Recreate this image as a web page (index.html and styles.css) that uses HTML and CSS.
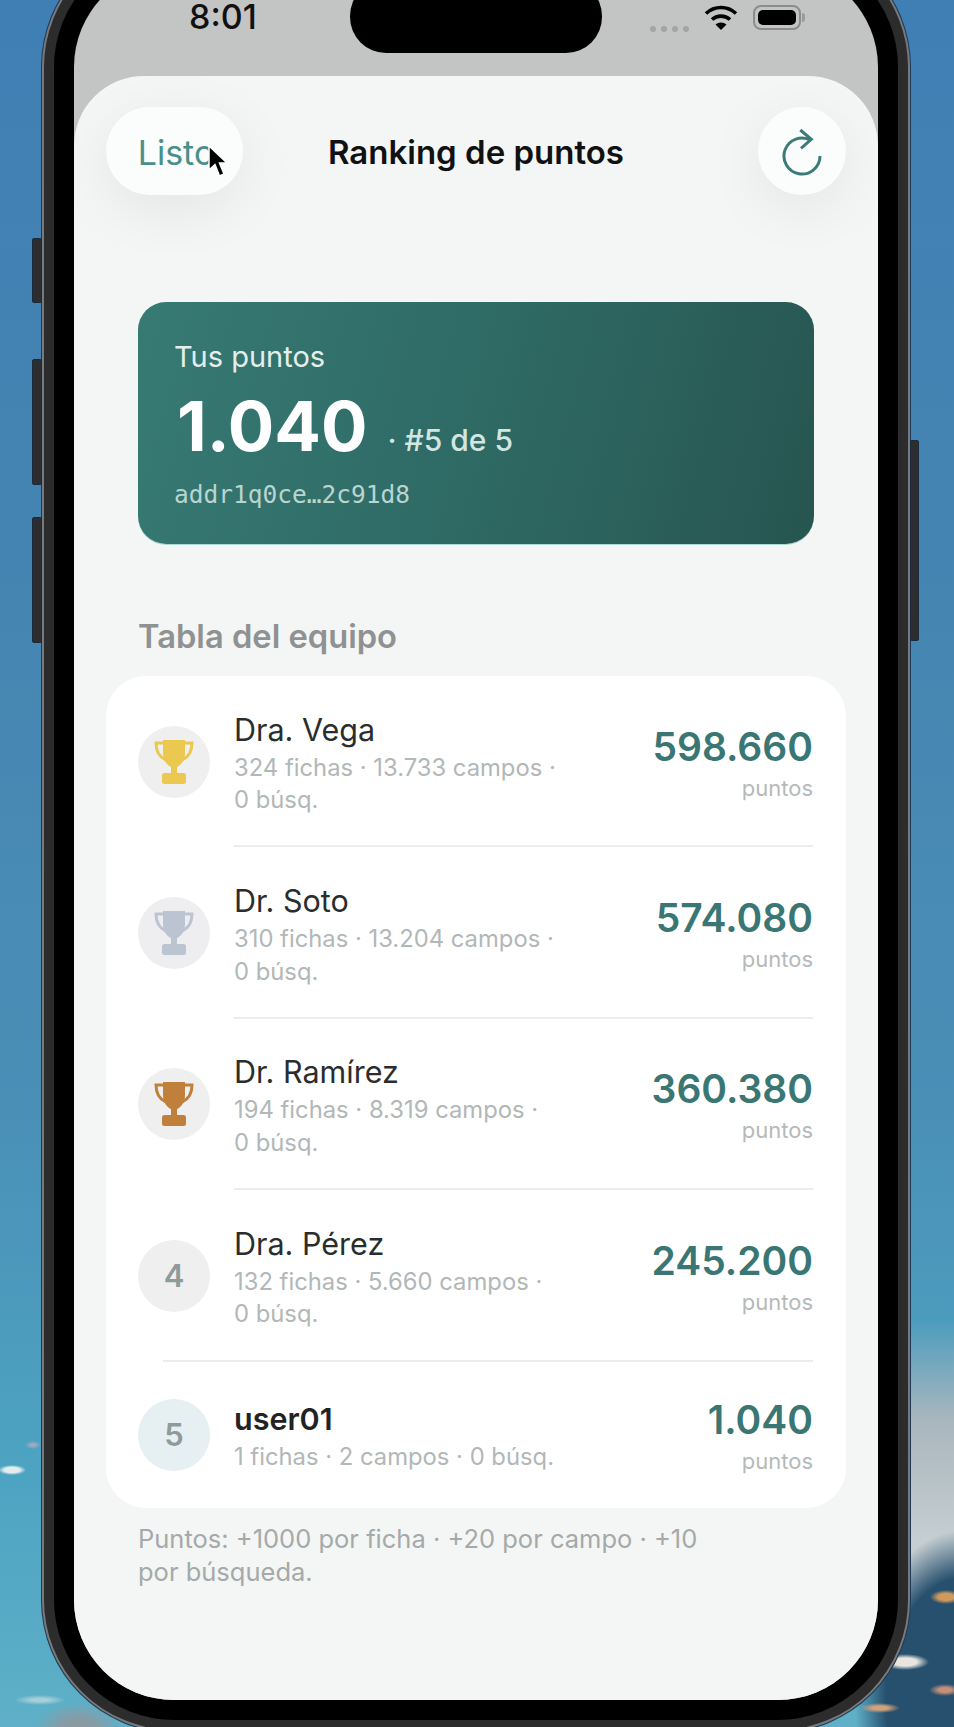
FILE: index.html
```html
<!DOCTYPE html>
<html lang="es">
<head>
    <meta charset="UTF-8">
    <meta name="viewport" content="width=device-width, initial-scale=1.0">
    <title>Ranking de puntos</title>
    <link rel="stylesheet" href="styles.css">
</head>
<body>
    <svg class="defs" width="0" height="0">
        <symbol id="trophy" viewBox="0 0 40 46">
            <path d="M9 1H31V14C31 22 26 27 23 28V34H17V28C14 27 9 22 9 14Z" fill="currentColor"/>
            <rect x="8" y="34" width="24" height="11" rx="2.5" fill="currentColor"/>
            <path d="M9 4H2C2 13 5 18 12 21M31 4H38C38 13 35 18 28 21" fill="none" stroke="currentColor" stroke-width="3"/>
        </symbol>
    </svg>

    <div class="phone">
        <span class="side-btn btn-a"></span>
        <span class="side-btn btn-b"></span>
        <span class="side-btn btn-c"></span>
        <span class="side-btn btn-d"></span>
        <div class="bezel">
            <div class="screen">
                <div class="status">
                    <div class="status-left">8:01</div>
                    <div class="island"></div>
                    <div class="status-right">
                        <div class="dots"><i></i><i></i><i></i><i></i></div>
                        <svg class="wifi" width="34" height="26" viewBox="0 0 34 26">
                            <path d="M2 9.5C10.500 1.500 23.500 1.500 32 9.500" fill="none" stroke="#000" stroke-width="3.600"/>
                            <path d="M8 15.500C13 11 21 11 26 15.500" fill="none" stroke="#000" stroke-width="3.600"/>
                            <path d="M17 26L11.500 20.500C14.500 17.800 19.500 17.800 22.500 20.500Z" fill="#000"/>
                        </svg>
                        <div class="battery"><div class="battery-fill"></div></div>
                        <span class="battery-nub"></span>
                    </div>
                </div>

                <div class="sheet">
                    <div class="header">
                        <button class="pill" type="button">Listo
                            <svg class="cursor" width="22" height="34" viewBox="0 0 22 34">
                                <path d="M2 1V25L8 19.500L12.500 31L17 29L12.500 18H20Z" fill="#000" stroke="#fff" stroke-width="1.500"/>
                            </svg>
                        </button>
                        <div class="title">Ranking de puntos</div>
                        <button class="round" type="button">
                            <svg width="44" height="50" viewBox="0 0 44 50">
                                <path d="M31 14.400A18 18 0 1 0 40 30" fill="none" stroke="#3b7c79" stroke-width="3"/>
                                <path d="M20.300 4L31.300 13.300L21 22.300" fill="none" stroke="#3b7c79" stroke-width="3"/>
                            </svg>
                        </button>
                    </div>

                    <div class="score-card">
                        <div class="score-label">Tus puntos</div>
                        <div class="score-line">
                            <span class="score-num">1.040</span>
                            <span class="score-rank">· #5 de 5</span>
                        </div>
                        <div class="score-addr">addr1q0ce…2c91d8</div>
                    </div>

                    <h2 class="section">Tabla del equipo</h2>

                    <div class="list">
                        <div class="row">
                            <div class="badge"><svg class="cup gold"><use href="#trophy"/></svg></div>
                            <div class="info">
                                <div class="name">Dra. Vega</div>
                                <div class="sub">324 fichas · 13.733 campos ·<br>0 búsq.</div>
                            </div>
                            <div class="pts">
                                <div class="pts-num">598.660</div>
                                <div class="pts-label">puntos</div>
                            </div>
                        </div>
                        <div class="divider"></div>
                        <div class="row">
                            <div class="badge silver-bg"><svg class="cup silver"><use href="#trophy"/></svg></div>
                            <div class="info">
                                <div class="name">Dr. Soto</div>
                                <div class="sub">310 fichas · 13.204 campos ·<br>0 búsq.</div>
                            </div>
                            <div class="pts">
                                <div class="pts-num">574.080</div>
                                <div class="pts-label">puntos</div>
                            </div>
                        </div>
                        <div class="divider"></div>
                        <div class="row">
                            <div class="badge"><svg class="cup bronze"><use href="#trophy"/></svg></div>
                            <div class="info">
                                <div class="name">Dr. Ramírez</div>
                                <div class="sub">194 fichas · 8.319 campos ·<br>0 búsq.</div>
                            </div>
                            <div class="pts">
                                <div class="pts-num">360.380</div>
                                <div class="pts-label">puntos</div>
                            </div>
                        </div>
                        <div class="divider"></div>
                        <div class="row">
                            <div class="badge">4</div>
                            <div class="info">
                                <div class="name">Dra. Pérez</div>
                                <div class="sub">132 fichas · 5.660 campos ·<br>0 búsq.</div>
                            </div>
                            <div class="pts">
                                <div class="pts-num">245.200</div>
                                <div class="pts-label">puntos</div>
                            </div>
                        </div>
                        <div class="divider wide"></div>
                        <div class="row me">
                            <div class="badge me-bg">5</div>
                            <div class="info">
                                <div class="name">user01</div>
                                <div class="sub">1 fichas · 2 campos · 0 búsq.</div>
                            </div>
                            <div class="pts">
                                <div class="pts-num">1.040</div>
                                <div class="pts-label">puntos</div>
                            </div>
                        </div>
                    </div>

                    <p class="note">Puntos: +1000 por ficha · +20 por campo · +10 por búsqueda.</p>
                </div>
            </div>
        </div>
    </div>
</body>
</html>
```

FILE: styles.css
```css
* {
    box-sizing: border-box;
}
html, body {
    margin: 0;
    height: 1727px;
    overflow: hidden;
}
body {
    font-family: "Inter", "Liberation Sans", sans-serif;
    background-color: #4589b5;
    background-repeat: no-repeat;
    background-image:
        radial-gradient(ellipse 14px 5px at 12px 1470px, #e4ecec 55%, transparent 100%),
        radial-gradient(ellipse 8px 4px at 33px 1445px, #a9a8c4 20%, transparent 100%),
        radial-gradient(ellipse 26px 5px at 40px 1700px, #a9d0d8 30%, transparent 100%),
        radial-gradient(ellipse 44px 30px at 78px 1732px, #8a9aa2 40%, transparent 100%),
        radial-gradient(ellipse 24px 8px at 905px 1662px, #e8e6df 50%, transparent 100%),
        radial-gradient(ellipse 16px 7px at 946px 1597px, #d09a5c 50%, transparent 100%),
        radial-gradient(ellipse 20px 5px at 880px 1708px, #d0a27a 40%, transparent 100%),
        radial-gradient(ellipse 16px 6px at 945px 1690px, #c4907a 40%, transparent 100%),
        radial-gradient(ellipse 110px 170px at 965px 1700px, #27506e 72%, transparent 100%),
        linear-gradient(180deg, transparent 1320px, #a9b6bd 1420px, #c5ced2 1540px, #c5ced2 1727px),
        linear-gradient(180deg, #3f7fb4 0, #4585b2 600px, #4a8fb6 1100px, #4da4c2 1480px, #5fb0c8 1727px);
    background-size: auto, auto, auto, auto, auto, auto, auto, auto, auto, 44px 100%, auto;
    background-position: 0 0, 0 0, 0 0, 0 0, 0 0, 0 0, 0 0, 0 0, 0 0, right top, 0 0;
}
.defs {
    position: absolute;
}

.phone {
    position: relative;
    width: 868px;
    height: 1797px;
    margin: -65px 0 0 42px;
}
.bezel {
    height: 100%;
    padding: 20px;
    background: #000;
    border: 12px solid #2c2c2c;
    border-radius: 132px;
    box-shadow: 0 0 0 1px #1d3a5a;
    outline: 2px solid #777a7c;
    outline-offset: -2px;
}
.side-btn {
    position: absolute;
    width: 10px;
    background: #2b2d30;
    border: 1px solid #1c2a3c;
    border-radius: 2px;
}
.btn-a { left: -10px; top: 303px; height: 65px; }
.btn-b { left: -10px; top: 424px; height: 126px; }
.btn-c { left: -10px; top: 582px; height: 126px; }
.btn-d { right: -9px; top: 505px; height: 201px; width: 9px; }

.screen {
    display: flex;
    flex-direction: column;
    height: 100%;
    background: #c3c5c4;
    border-radius: 100px;
    overflow: hidden;
}

.status {
    display: flex;
    flex: 0 0 109px;
}
.status-left {
    width: 276px;
    padding: 35px 0 0 115px;
    font-size: 34px;
    font-weight: 500;
    line-height: 30px;
    color: #111;
}
.island {
    width: 252px;
    height: 73px;
    margin-top: 13px;
    background: #000;
    border-radius: 36px;
}
.status-right {
    display: flex;
    align-items: center;
    height: 26px;
    margin: 37px 0 0 48px;
}
.dots {
    display: flex;
    gap: 5px;
    margin: 24px 15px 0 0;
}
.dots i {
    width: 6px;
    height: 6px;
    background: #a3a5a5;
    border-radius: 50%;
}
.battery {
    width: 48px;
    height: 25px;
    margin-left: 15px;
    padding: 3px;
    border: 2px solid #8b8d8d;
    border-radius: 8px;
}
.battery-fill {
    height: 100%;
    background: #000;
    border-radius: 5px;
}
.battery-nub {
    width: 3px;
    height: 9px;
    margin-left: 1px;
    background: #9a9c9c;
    border-radius: 0 3px 3px 0;
}

.sheet {
    flex: 1;
    padding: 31px 32px 0;
    background: #f4f6f5;
    border-radius: 70px 70px 0 0;
}
.header {
    display: grid;
    grid-template-columns: 1fr auto 1fr;
    align-items: center;
    height: 88px;
}
.pill, .round {
    height: 88px;
    padding: 0;
    font-family: inherit;
    background: #fbfdfc;
    border: 0;
    box-shadow: 0 14px 60px rgba(0, 0, 0, 0.07);
}
.pill {
    position: relative;
    justify-self: start;
    width: 137px;
    padding: 3px 0 0 3px;
    font-size: 34px;
    color: #4a8f8b;
    border-radius: 44px;
}
.cursor {
    position: absolute;
    left: 101px;
    top: 38px;
}
.round {
    display: flex;
    align-items: center;
    justify-content: center;
    justify-self: end;
    width: 88px;
    border-radius: 50%;
}
.title {
    padding-top: 2px;
    font-size: 33px;
    font-weight: 600;
    color: #111;
}

.score-card {
    height: 242px;
    margin: 107px 32px 0;
    padding: 35px 36px;
    color: #fff;
    background: linear-gradient(105deg, #377a74 0%, #2f6a65 50%, #275550 100%);
    border-radius: 28px;
    box-shadow: 0 1px 0 #a8dad2;
}
.score-label {
    font-size: 29px;
    line-height: 40px;
    color: #e2efec;
}
.score-line {
    display: flex;
    align-items: baseline;
    gap: 20px;
    margin: 11px 0 0 3px;
}
.score-num {
    font-size: 69px;
    font-weight: 700;
    line-height: 76px;
}
.score-rank {
    font-size: 30px;
    font-weight: 500;
    color: #d3e6e2;
}
.score-addr {
    margin-top: 16px;
    font-family: "DejaVu Sans Mono", "Liberation Mono", monospace;
    font-size: 24.500px;
    color: #b9d5d0;
}

.section {
    margin: 68px 0 0 32px;
    font-size: 32.700px;
    font-weight: 600;
    line-height: 48px;
    color: #8f9192;
}

.list {
    margin-top: 16px;
    background: #fff;
    border-radius: 40px;
}
.row {
    display: flex;
    align-items: center;
    gap: 24px;
    height: 169.400px;
    padding: 2px 33px 0 32px;
}
.row.me {
    height: 146px;
    padding-top: 0;
}
.divider {
    height: 2px;
    margin: 0 33px 0 128px;
    background: #ececec;
}
.divider.wide {
    margin-left: 57px;
}
.badge {
    display: flex;
    flex: 0 0 72px;
    align-items: center;
    justify-content: center;
    height: 72px;
    font-size: 31px;
    font-weight: 600;
    color: #8f9a9a;
    background: #efefef;
    border-radius: 50%;
}
.silver-bg {
    background: #eeeef0;
}
.me-bg {
    background: #e6eff1;
}
.cup {
    width: 40px;
    height: 46px;
}
.gold { color: #ebc84f; }
.silver { color: #bcc4d2; }
.bronze { color: #c0803c; }

.info {
    flex: 1;
    padding-top: 3px;
}
.name {
    font-size: 30.500px;
    line-height: 40px;
    color: #2b2d2d;
}
.me .name {
    font-weight: 600;
    color: #222;
}
.sub {
    margin-top: 2px;
    font-size: 23.800px;
    line-height: 32.500px;
    color: #b2b7b7;
}
.pts {
    padding-top: 3px;
    text-align: right;
}
.pts-num {
    font-size: 39px;
    font-weight: 600;
    line-height: 46px;
    color: #3a7673;
}
.pts-label {
    margin-top: 3px;
    font-size: 22px;
    line-height: 30px;
    color: #b5b9b9;
}

.note {
    max-width: 585px;
    margin: 14px 0 0 32px;
    font-size: 25.500px;
    line-height: 33px;
    color: #a5a9a9;
}
```
